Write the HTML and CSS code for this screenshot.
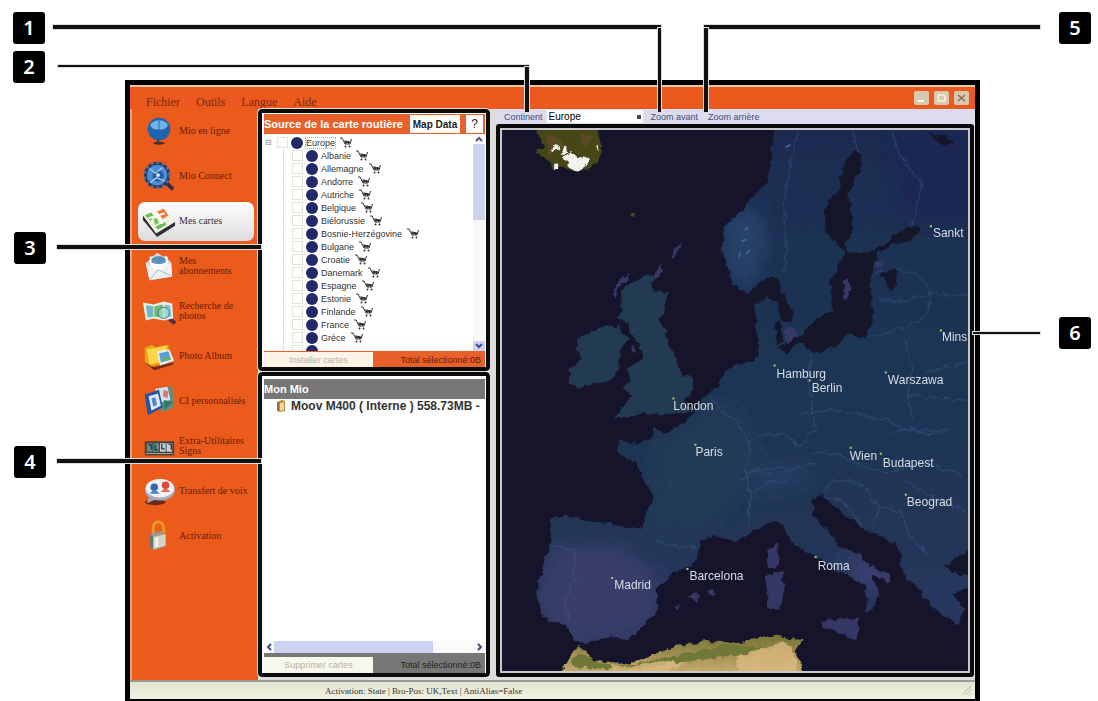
FILE: index.html
```html
<!DOCTYPE html>
<html lang="fr">
<head>
    <meta charset="UTF-8">
    <title>Mes cartes</title>
    <link rel="stylesheet" href="styles.css">
</head>
<body>
    <svg class="defs" aria-hidden="true">
        <symbol id="cart" viewBox="0 0 12 11">
            <path d="M0 1h2l3 6h5l1.500-5M4 4l6 1M4.500 5.500h6M6 3.500v3.500M8.500 4v3" fill="none" stroke="#333" stroke-width="1"/>
            <circle cx="5.500" cy="9.500" r="1" fill="#333"/><circle cx="9.500" cy="9.500" r="1" fill="#333"/>
        </symbol>
    </svg>
    <div class="figure">
        <div class="window">
            <div class="titlebar">
                <div class="menu">
                    <button>Fichier</button>
                    <button>Outils</button>
                    <button>Langue</button>
                    <button>Aide</button>
                </div>
                <div class="controls">
                    <button aria-label="Réduire"><svg viewBox="0 0 15 14"><path d="M4 10h6" stroke="#fff" stroke-width="2"/></svg></button>
                    <button aria-label="Agrandir"><svg viewBox="0 0 15 14"><path d="M4 4h7v6H4z" stroke="#f7f3e6" stroke-width="1.500" fill="none"/></svg></button>
                    <button aria-label="Fermer"><svg viewBox="0 0 15 14"><path d="M4 4l7 6M11 4l-7 6" stroke="#8a6a50" stroke-width="1.500"/></svg></button>
                </div>
            </div>
            <div class="content">
                <nav class="sidebar">
                    <a href="#">
                        <svg viewBox="0 0 36 36"><ellipse cx="18" cy="31" rx="6" ry="1.500" fill="#4a2a20"/><circle cx="18" cy="16" r="12" fill="#1f62ae"/><path d="M8 11q10-9 20 0-3 6-10 6T8 11z" fill="#6fb2e8"/><path d="M6 17h24M18 4v24M10 8q-5 8 0 17M26 8q5 8 0 17" fill="none" stroke="#2a66a8" stroke-width="1"/><path d="M17 27v4" stroke="#2b3c55" stroke-width="2"/></svg>
                        <span>Mio en ligne</span>
                    </a>
                    <a href="#">
                        <svg viewBox="0 0 36 36"><path d="M24 24l9 8" stroke="#3c2b40" stroke-width="4"/><circle cx="16" cy="17" r="14" fill="#26375f"/><circle cx="16" cy="17" r="11" fill="#4e8cd0"/><circle cx="16" cy="17" r="13" fill="none" stroke="#5f75a0" stroke-width="2" stroke-dasharray="3 3"/><circle cx="17" cy="18" r="6" fill="#255ba8"/><path d="M8 10l6 5 8-6M9 25l6-5 9 3" stroke="#9cc6ea" fill="none" stroke-width="1.500"/><circle cx="17" cy="17" r="2" fill="#d5eeff"/></svg>
                        <span>Mio Connect</span>
                    </a>
                    <a href="#" class="active">
                        <svg viewBox="0 0 36 36"><path d="M1 12l14 19 20-12v4L16 35 1 17z" fill="#302d33"/><path d="M1 12l14 19 19-12L23 4z" fill="#f2f1e3"/><path d="M3 12l7-3 2 4-3 5zM14 24l10-5 2 3-9 5z" fill="#69bb53"/><path d="M16 8l7-3 5 7-6 4z" fill="#ed7a35"/><path d="M7 15l17-5M13 8l9 13" stroke="#fff" stroke-width="2"/><path d="M12 16l4-1 2 5-4 2z" fill="#6dc466"/></svg>
                        <span>Mes cartes</span>
                    </a>
                    <a href="#">
                        <svg viewBox="0 0 36 36"><path d="M4 15l12-11 14 9 2 16-24 4z" fill="#d6dce4"/><path d="M8 8h19l1 12-10 5-9-6z" fill="#f8fbff"/><path d="M10 10q8-5 15 0v4q-7 4-15 0z" fill="#5c8dbb"/><path d="M4 15l14 9 13-10 1 15-24 4z" fill="#eef0f3"/><path d="M8 33l9-11 15 7" fill="none" stroke="#aab3bd"/></svg>
                        <span>Mes<br>abonnements</span>
                    </a>
                    <a href="#">
                        <svg viewBox="0 0 36 36"><path d="M26 24l9 7" stroke="#453045" stroke-width="4"/><path d="M1 9l11 2 11-3 9 2 1 16-10 2-11-2-8 2z" fill="#e8efe6"/><path d="M4 12l8 1v11l-6 1z" fill="#6fb5ca"/><path d="M13 13l9-2v14l-9-1z" fill="#70b96e"/><path d="M24 11l6 1 1 12-7 1z" fill="#80c5d5"/><circle cx="23" cy="20" r="6" fill="#a7dccb" fill-opacity=".7" stroke="#49777e"/></svg>
                        <span>Recherche de photos</span>
                    </a>
                    <a href="#">
                        <svg viewBox="0 0 36 36"><path d="M3 25l10 5 20-5v2l-20 6z" fill="#6c2c18"/><path d="M3 9l8-3 3 3 14-3 1 18-19 5-7-5z" fill="#e6a91c"/><path d="M5 11l21-4v16L8 27z" fill="#ffd44b"/><path d="M16 13l13-2 5 12-15 5z" fill="#e5f1f5"/><path d="M18 15l10-2 3 9-11 3z" fill="#5b9fcf"/><path d="M20 23l6-4 5 3z" fill="#75ae54"/></svg>
                        <span>Photo Album</span>
                    </a>
                    <a href="#">
                        <svg viewBox="0 0 36 36"><path d="M16 4l16-1 2 22-13 5z" fill="#5c8f80"/><path d="M14 5l13-2 3 14-14 4z" fill="#d5dfef"/><path d="M23 6l5 2-1 7-5-2z" fill="#da7770"/><path d="M3 11l15-5 4 19L6 33z" fill="#26549f"/><path d="M7 13l10-3 3 13-10 5z" fill="#dceaf9"/><path d="M10 15l4-1 2 8-4 2z" fill="#4f84ce"/><path d="M23 17l10 2-9 8z" fill="#307b5f"/></svg>
                        <span>CI personnalisés</span>
                    </a>
                    <a href="#">
                        <svg viewBox="0 0 36 36"><path d="M3 13h31v15H3z" fill="#42423e"/><path d="M5 15h6v9H5zM12 15h6v9h-6z" fill="#668b82"/><path d="M19 15h6v9h-6zM26 15h6v9h-6z" fill="#c9ccd0"/><path d="M21 16v5h3M28 16h3v6M7 17h3v5M14 17v5h3" fill="none" stroke="#28385b" stroke-width="1.500"/><path d="M4 26h29" stroke="#a7aba0"/></svg>
                        <span>Extra-Utilitaires Signs</span>
                    </a>
                    <a href="#">
                        <svg viewBox="0 0 36 36"><ellipse cx="14" cy="30" rx="11" ry="3" fill="#692b1a"/><path d="M8 23l-3 8 12-5z" fill="#a3a6ae"/><ellipse cx="19" cy="17" rx="16" ry="11" fill="#a5adb9"/><ellipse cx="19" cy="15" rx="15" ry="10" fill="#eef1f5"/><circle cx="13" cy="14" r="4" fill="#3767b0"/><path d="M8 21q5-7 11 0" fill="#5385c4"/><circle cx="25" cy="12" r="4" fill="#d84b38"/><path d="M20 19q5-7 10 0" fill="#e36c52"/></svg>
                        <span>Transfert de voix</span>
                    </a>
                    <a href="#">
                        <svg viewBox="0 0 36 36"><path d="M12 15q-1-12 5-12 7 0 6 12" fill="none" stroke="#e99a22" stroke-width="3"/><path d="M8 16l12-3 5 4v12l-13 4-4-4z" fill="#9b9b90"/><path d="M8 16l4 3v14l-4-4z" fill="#6e746c"/><path d="M12 19l13-3v12l-13 4z" fill="#d2d4c7"/><path d="M14 20l3-1v10l-3 1z" fill="#f7f6e8"/></svg>
                        <span>Activation</span>
                    </a>
                </nav>
                <div class="panels">
                    <section class="panel source">
                        <div class="panel-head">
                            <h2>Source de la carte routière</h2>
                            <button class="map-data">Map Data</button>
                            <button class="help">?</button>
                        </div>
                        <div class="tree-box">
                            <ul class="tree">
                                <li class="root"><label><i>⊟</i><input type="checkbox"><b></b><span>Europe</span></label><svg><use href="#cart"/></svg></li>
                                <li><label><input type="checkbox"><b></b><span>Albanie</span></label><svg><use href="#cart"/></svg></li>
                                <li><label><input type="checkbox"><b></b><span>Allemagne</span></label><svg><use href="#cart"/></svg></li>
                                <li><label><input type="checkbox"><b></b><span>Andorre</span></label><svg><use href="#cart"/></svg></li>
                                <li><label><input type="checkbox"><b></b><span>Autriche</span></label><svg><use href="#cart"/></svg></li>
                                <li><label><input type="checkbox"><b></b><span>Belgique</span></label><svg><use href="#cart"/></svg></li>
                                <li><label><input type="checkbox"><b></b><span>Biélorussie</span></label><svg><use href="#cart"/></svg></li>
                                <li><label><input type="checkbox"><b></b><span>Bosnie-Herzégovine</span></label><svg><use href="#cart"/></svg></li>
                                <li><label><input type="checkbox"><b></b><span>Bulgarie</span></label><svg><use href="#cart"/></svg></li>
                                <li><label><input type="checkbox"><b></b><span>Croatie</span></label><svg><use href="#cart"/></svg></li>
                                <li><label><input type="checkbox"><b></b><span>Danemark</span></label><svg><use href="#cart"/></svg></li>
                                <li><label><input type="checkbox"><b></b><span>Espagne</span></label><svg><use href="#cart"/></svg></li>
                                <li><label><input type="checkbox"><b></b><span>Estonie</span></label><svg><use href="#cart"/></svg></li>
                                <li><label><input type="checkbox"><b></b><span>Finlande</span></label><svg><use href="#cart"/></svg></li>
                                <li><label><input type="checkbox"><b></b><span>France</span></label><svg><use href="#cart"/></svg></li>
                                <li><label><input type="checkbox"><b></b><span>Grèce</span></label><svg><use href="#cart"/></svg></li>
                                <li><label><input type="checkbox"><b></b></label></li>
                            </ul>
                            <div class="vscroll">
                                <svg viewBox="0 0 12 10"><path d="M3 7l3-3 3 3" fill="none" stroke="#4a5a8c" stroke-width="2"/></svg>
                                <div class="thumb"></div>
                                <svg class="down" viewBox="0 0 12 10"><path d="M3 3l3 3 3-3" fill="none" stroke="#3a4a9c" stroke-width="2"/></svg>
                            </div>
                        </div>
                        <div class="panel-foot">
                            <button>Installer cartes</button>
                            <span>Total sélectionné:0B</span>
                        </div>
                    </section>
                    <section class="panel device">
                        <div class="panel-head">
                            <h2>Mon Mio</h2>
                        </div>
                        <div class="device-row">
                            <svg viewBox="0 0 10 14"><path d="M1 3l5-2 3 1v10l-5 1-3-1z" fill="#b98a3a"/><path d="M4 4l4-1v8l-4 1z" fill="#f0d9a0"/><path d="M2 3v9" stroke="#6e542a"/></svg>
                            <span>Moov M400 ( Interne ) 558.73MB -</span>
                        </div>
                        <div class="hscroll">
                            <svg viewBox="0 0 10 12"><path d="M7 3L4 6l3 3" fill="none" stroke="#3f4d7c" stroke-width="2"/></svg>
                            <div class="track"><div class="thumb"></div></div>
                            <svg viewBox="0 0 10 12"><path d="M3 3l3 3-3 3" fill="none" stroke="#3f4d7c" stroke-width="2"/></svg>
                        </div>
                        <div class="panel-foot">
                            <button>Supprimer cartes</button>
                            <span>Total sélectionné:0B</span>
                        </div>
                    </section>
                </div>
                <div class="main">
                    <div class="toolbar">
                        <label for="continent">Continent</label>
                        <select id="continent"><option>Europe</option></select>
                        <button>Zoom avant</button>
                        <button>Zoom arrière</button>
                    </div>
                    <div class="map">
                        <svg viewBox="502 130 465 540" preserveAspectRatio="xMidYMid slice">
                            <defs>
                                <filter id="coast" x="-5%" y="-5%" width="110%" height="110%">
                                    <feTurbulence type="fractalNoise" baseFrequency=".12" numOctaves="3" seed="4"/>
                                    <feDisplacementMap in="SourceGraphic" scale="8" xChannelSelector="R" yChannelSelector="G"/>
                                </filter>
                                <filter id="soft" x="-30%" y="-30%" width="160%" height="160%"><feGaussianBlur stdDeviation="9"/></filter>
                                <linearGradient id="land" x1="0" y1="0" x2="0" y2="1">
                                    <stop offset="0" stop-color="#1b2b50"/>
                                    <stop offset=".45" stop-color="#1e3554"/>
                                    <stop offset=".75" stop-color="#203654"/>
                                    <stop offset="1" stop-color="#2b3762"/>
                                </linearGradient>
                                <linearGradient id="desert" x1="0" y1="0" x2="0" y2="1">
                                    <stop offset="0" stop-color="#6f7335"/>
                                    <stop offset=".4" stop-color="#a18d50"/>
                                    <stop offset="1" stop-color="#dab87b"/>
                                </linearGradient>
                                <clipPath id="mainland">
                                    <path d="M775 125L767 183 745 203 742 210 723 227 723 253 732 283 745 292 755 302 758 353 755 362 735 365 725 368 717 387 708 393 692 413 685 422 665 432 652 427 650 440 638 442 617 440 618 452 635 462 643 477 652 493 648 507 643 528 618 525 588 520 568 514 552 518 550 543 537 590 542 617 565 623 575 640 583 642 602 637 628 638 642 627 658 608 655 590 672 573 695 563 700 540 712 535 735 540 745 535 768 522 782 523 790 540 815 557 842 573 863 583 867 597 863 613 872 608 878 593 870 573 892 582 888 573 860 560 858 552 838 545 828 530 812 515 812 498 822 493 832 505 865 530 882 535 898 547 902 570 922 593 935 610 958 623 962 607 952 592 975 583V125z"/>
                                </clipPath>
                            </defs>
                            <path class="sea" d="M400 0h700v800H400z"/>
                            <g filter="url(#coast)">
                                <path fill="url(#land)" d="M775 120L767 183 745 203 742 210 723 227 723 253 732 283 745 292 755 302 758 353 755 362 735 365 725 368 717 387 708 393 692 413 685 422 665 432 652 427 650 440 638 442 617 440 618 452 635 462 643 477 652 493 648 507 643 528 618 525 588 520 568 514 552 518 550 543 537 590 542 617 565 623 575 640 583 642 602 637 628 638 642 627 658 608 655 590 672 573 695 563 700 540 712 535 735 540 745 535 768 522 782 523 790 540 815 557 842 573 863 583 867 597 863 613 872 608 878 593 870 573 892 582 888 573 860 560 858 552 838 545 828 530 812 515 812 498 822 493 832 505 865 530 882 535 898 547 902 570 922 593 935 610 958 623 962 607 952 592 985 583V120z"/>
                                <g clip-path="url(#mainland)">
                                    <g filter="url(#soft)">
                                        <path d="M555 545l65 0 38 30-10 55-80 15-35-45z" fill="#383c69"/>
                                        <path d="M660 440l70-40 30 60-50 70-60 0z" fill="#233a57"/>
                                        <path d="M725 215l30-10 12 40-20 45-25-25z" fill="#26426a"/>
                                        <path d="M840 555l50 15-5 20-30-15z" fill="#45427a"/>
                                        <path d="M890 130h90v90h-70z" fill="#1b2753"/>
                                        <path d="M745 475l60-12 10 12-50 20z" fill="#223c62"/>
                                    </g>
                                </g>
                                <path class="isle" d="M638 277L652 275 652 290 668 293 660 317 668 340 675 353 681 375 694 377 690 395 683 404 693 409 678 414 645 413 630 416 612 419 628 400 633 394 620 388 632 380 628 367 642 358 640 343 632 337 628 323 618 317 623 303 620 290 628 285z"/>
                                <path class="isle" d="M608 325L620 327 628 340 620 350 618 370 608 380 578 387 568 382 570 368 582 360 577 350 578 338 595 330z"/>
                                <path class="south" d="M671 256l2-8 7-6-2 10-4 5zM652 278l3-8 8-5-2 8-8 9zM613 300l1-12 6-9 9-6-3 8-8 6zM631 350l3-6 2 5-4 5z"/>
                                <path class="south" d="M820 620L836 618 857 617 858 628 855 638 838 632 822 627zM765 575L782 570 784 590 780 606 768 610zM767 547L778 540 777 567 768 567zM689 595l7-5 5 5-5 5zM673 606l4-3 1 5zM707 590l5-1 2 4-5 1z"/>
                                <path class="sea" d="M852 152L861 154 860 170 850 188 847 195 852 215 852 232 843 245 848 252 866 252 880 246 893 235 915 225 920 229 912 240 890 245 878 253 872 267 868 287 873 313 865 338 848 333 832 347 815 352 798 343 785 353 778 348 790 338 802 335 812 322 832 310 830 280 842 260 843 250 825 233 824 210 838 188 843 167z"/>
                                <path class="sea" d="M880 272L893 268 895 282 892 291 882 278zM745 295L765 278 778 277 783 297 794 313 788 322 779 318 777 302 768 297 752 306zM928 132L952 140 954 146 940 144zM945 565L968 548 970 574 958 574zM774 320l5-2 4 24-6 2z"/>
                                <path class="south" d="M843 281l5-2 1 12-4 10-3-5zM873 261l8-3 1 8-7 2zM784 330l10-3 2 9-9 6z"/>
                                <path d="M536 132L544 146 536 153 547 158 553 169 562 166 572 171 587 170 598 161 602 147 597 125H542z" fill="#464619"/>
                                <path d="M547 134l14 4 4 8-16 8zM577 134l14 3-6 12z" fill="#5b4927"/>
                                <path d="M564 156L572 151 578 157 589 158 587 165 578 171 569 168zM551 149l6-4 2 4-6 3zM561 149l5-2 1 5-5 2zM554 165l4-1v5h-4zM594 147l4-2v5z" fill="#f2f3ec"/>
                                <path d="M557 680L577 643 584 650 592 658 628 663 655 653 675 645 705 640 740 642 778 634 790 637 803 638 795 650 806 680z" fill="url(#desert)"/>
                                <path d="M572 658l8-4 20 7 35 3 30-8 60-12 60 2-50 8-60 8-40 6-25 0-35-2z" fill="#6f7839"/>
                                <path d="M610 662l20 4 30-6 25 2-30 14h-40zM735 655l50-15 8 12 5 20h-60z" fill="#dcb980" opacity=".8"/>
                                <path d="M630 214l4-3 2 5-4 1z" fill="#49481c"/>
                            </g>
                            <g class="borders" filter="url(#coast)">
                                <path d="M850 130l4 14 4 9M892 133l5 18 12 18 12 14-4 18-5 23M798 130l-6 25-5 30-4 20 3 40-3 30"/>
                                <path d="M870 273l22-4 28 6 10 18-4 20-20 14-38 10M878 300l30 0 22-6h37M904 338l8 30-6 28 7 22M925 372l42-10M905 395l62 5"/>
                                <path d="M810 352l-3 25 4 30 4 20-16 18-18-12-22 2M799 415l30-6 25 4 28 6 34 12 34-3M811 452l24 0 22 12 26 8 38-10 40 12"/>
                                <path d="M708 393l16 20 18 14 8 18-6 28 6 20-2 34M652 538l20 8 24 2M746 471l22-4 22 2 24-8M822 492l12-14 28 6 16 22-6 20M878 506l22 4 8 24 20 20M905 480l30 20 30 10M551 545l24 4-2 30-8 20 3 22"/>
                                <path d="M818 495l24 4 20 28M740 480l14-10 18 4M752 492l18-12 16 2M890 433l20-6 18 8 20-4"/>
                            </g>
                            <g class="snow"><path d="M744 230l4-3M741 241l5-2M746 254l3-4M785 147l5-2M740 252l-2 5"/></g>
                            <g class="dots">
                                <path d="M929 226h2M939 330h2M773 365h2M808 380h2M884 372h2M672 398h2M694 444h2M849 447h2M879 453h2M904 494h2M611 577h2M686 568h2M814 556h2"/>
                            </g>
                            <g class="cities">
                                <text x="932" y="237">Sankt</text>
                                <text x="941" y="341">Mins</text>
                                <text x="776" y="377">Hamburg</text>
                                <text x="811" y="391">Berlin</text>
                                <text x="887" y="383">Warszawa</text>
                                <text x="673" y="409">London</text>
                                <text x="695" y="455">Paris</text>
                                <text x="849" y="459">Wien</text>
                                <text x="882" y="466">Budapest</text>
                                <text x="906" y="505">Beograd</text>
                                <text x="614" y="588">Madrid</text>
                                <text x="689" y="579">Barcelona</text>
                                <text x="817" y="569">Roma</text>
                            </g>
                        </svg>
                    </div>
                </div>
            </div>
            <div class="status">
                <span>Activation: State | Bro-Pos: UK,Text | AntiAlias=False</span>
                <svg viewBox="0 0 12 12"><path d="M11 1L1 11M11 5l-6 6M11 9l-2 2" stroke="#b5b5a5"/></svg>
            </div>
        </div>

        <i class="line thick h1"></i><i class="line v1"></i>
        <i class="line h2"></i><i class="line v2"></i>
        <i class="line thick h3"></i>
        <i class="line thick h4"></i>
        <i class="line thick h5"></i><i class="line v5"></i>
        <i class="line h6"></i>
        <b class="num n1">1</b>
        <b class="num n2">2</b>
        <b class="num n3">3</b>
        <b class="num n4">4</b>
        <b class="num n5">5</b>
        <b class="num n6">6</b>
    </div>
</body>
</html>
```
FILE: styles.css
```css
* {
    box-sizing: border-box;
}
body {
    margin: 0;
    background: #fff;
    font-family: "Liberation Sans", Arial, sans-serif;
    font-size: 9px;
    color: #333;
}
button {
    margin: 0;
    padding: 0;
    border: 0;
    background: none;
    font: inherit;
    color: inherit;
    white-space: nowrap;
}
.defs {
    display: none;
}
.figure {
    position: relative;
    display: flex;
    min-height: 100vh;
    padding: 80px 118px 0 125px;
}
.window {
    flex: 1;
    min-width: 0;
    display: flex;
    flex-direction: column;
    border: 5px solid #000;
    background: #ea5b1c;
}
.titlebar {
    height: 24px;
    display: flex;
    justify-content: space-between;
    border-top: 2px solid #f5c9a8;
    background: #ec591f;
}
.menu {
    display: flex;
    align-items: flex-end;
    gap: 16px;
    padding-left: 16px;
    font-family: "Liberation Serif", "Times New Roman", serif;
    font-size: 12px;
    line-height: 14px;
    color: #7a2a10;
}
.controls {
    display: flex;
    align-items: center;
    gap: 5px;
    padding-right: 6px;
}
.controls button {
    width: 15px;
    height: 14px;
    border-radius: 2px;
    background: #d9c9ac;
}
.controls svg {
    display: block;
}
.content {
    flex: 1;
    min-height: 0;
    display: grid;
    grid-template-columns: 128px 232px 1fr;
}

/* left navigation */
.sidebar {
    display: grid;
    grid-auto-rows: 1fr;
    padding: 0 4px 122px 6px;
    border-left: 2px solid #f0a070;
}
.sidebar a {
    display: flex;
    align-items: center;
    gap: 3px;
    padding-left: 4px;
    font-family: "Liberation Serif", "Times New Roman", serif;
    font-size: 10px;
    line-height: 10px;
    color: #6b2008;
    text-decoration: none;
}
.sidebar svg {
    flex: none;
    width: 34px;
    height: 34px;
}
.sidebar .active {
    margin: 3px 0;
    border-radius: 7px;
    background: linear-gradient(#fff, #dcdcdf);
    color: #333;
}

/* panels */
.panels {
    display: flex;
    flex-direction: column;
    padding-bottom: 3px;
    background: #ddd;
}
.panel {
    display: flex;
    flex-direction: column;
    padding: 1px 1px 0 2px;
    border: 4px solid #0b0b0b;
    border-radius: 4px;
    background: #fff;
    outline: 1px solid #ddd;
}
.source {
    height: 262px;
}
.device {
    flex: 1;
    padding-top: 3px;
    margin-top: 1px;
}
.panel-head {
    display: flex;
    align-items: center;
    height: 20px;
    background: #e8602a;
    color: #fff;
}
.panel-head h2 {
    flex: 1;
    min-width: 0;
    margin: 0;
    font-size: 11px;
    white-space: nowrap;
}
.panel-head button {
    height: 18px;
    background: #fff;
    color: #222;
}
.panel-head .map-data {
    width: 50px;
    font-size: 10px;
    font-weight: bold;
}
.panel-head .help {
    width: 17px;
    margin: 0 2px 0 6px;
    font-size: 12px;
}
.device .panel-head {
    background: #777;
}
.tree-box {
    flex: 1;
    min-height: 0;
    display: flex;
}
.tree {
    flex: 1;
    margin: 0;
    padding: 2px 0 0 1px;
    overflow: hidden;
    list-style: none;
}
.tree li {
    display: flex;
    align-items: center;
    gap: 5px;
    height: 13px;
    padding-left: 18px;
    white-space: nowrap;
}
.tree .root {
    padding-left: 0;
}
.tree label {
    display: flex;
    align-items: center;
    gap: 3px;
}
.tree li:not(.root) label {
    border-left: 1px solid #ddd;
    padding-left: 8px;
}
.tree i {
    width: 9px;
    font-size: 8px;
    font-style: normal;
    color: #888;
}
.tree input {
    appearance: none;
    width: 11px;
    height: 11px;
    margin: 0;
    border: 1px solid #e2e6d8;
}
.tree b {
    width: 12px;
    height: 12px;
    border-radius: 50%;
    background: #22286a;
}
.tree .root span {
    outline: 1px dotted #aaa;
}
.tree svg {
    width: 12px;
    height: 11px;
}
.vscroll {
    display: flex;
    flex-direction: column;
    width: 12px;
    background: #f8f8f6;
}
.vscroll .thumb {
    height: 76px;
    background: #cdd2ee;
}
.vscroll .down {
    margin-top: auto;
    background: #cdd2ee;
}
.panel-foot {
    display: flex;
    height: 16px;
    border-top: 1px solid #e8602a;
    background: #e8602a;
    color: #6b1c05;
}
.panel-foot button {
    width: 109px;
    background: #fbf3e6;
    color: #b9b2a6;
}
.panel-foot span {
    flex: 1;
    padding-right: 4px;
    text-align: right;
    line-height: 16px;
}
.device .panel-foot {
    height: 20px;
    border-top: 4px solid #777;
    background: #777;
    color: #222;
}
.device .panel-foot button {
    background: #f7f7ee;
}
.device-row {
    flex: 1;
    display: flex;
    gap: 5px;
    padding-left: 12px;
    font-size: 12px;
    font-weight: bold;
    line-height: 14px;
    white-space: nowrap;
}
.device-row svg {
    flex: none;
    width: 10px;
    height: 14px;
}
.hscroll {
    display: flex;
    height: 12px;
    background: #fafafa;
}
.hscroll svg {
    width: 10px;
}
.hscroll .track {
    flex: 1;
}
.hscroll .thumb {
    width: 79%;
    height: 12px;
    background: #cdd2f0;
}

/* toolbar and map */
.main {
    display: flex;
    flex-direction: column;
    min-width: 0;
    padding: 0 1px 3px 6px;
    background: #ddd;
}
.toolbar {
    display: flex;
    align-items: center;
    height: 15px;
    padding-left: 8px;
    background: #dcdcee;
    line-height: 12px;
    color: #454a78;
}
.toolbar select {
    appearance: none;
    width: 96px;
    height: 13px;
    margin: 0 8px 0 4px;
    padding: 0 2px;
    border: 0;
    background: #fff linear-gradient(#445, #445) no-repeat right 2px center / 4px 4px;
    font: 10px "Liberation Sans", Arial, sans-serif;
}
.toolbar button {
    margin-right: 10px;
}
.map {
    flex: 1;
    min-height: 0;
    border: 4px solid #0b0b0b;
    border-radius: 3px;
    padding: 2px;
    background: #c8c8cc;
}
.map svg {
    display: block;
    width: 100%;
    height: 100%;
}
.sea {
    fill: #15142b;
}
.isle {
    fill: #233b52;
}
.south {
    fill: #343965;
}
.borders path {
    fill: none;
    stroke: #466a9c;
    stroke-width: 1;
    opacity: .5;
}
.snow path {
    stroke: #3f6088;
    stroke-width: 2;
}
.dots path {
    stroke: #b3c46a;
    stroke-width: 2;
}
.cities {
    fill: #d5dce4;
    font-size: 12px;
}

.status {
    display: flex;
    justify-content: space-between;
    align-items: center;
    height: 19px;
    padding: 0 3px 0 195px;
    border-top: 2px solid #999;
    background: linear-gradient(#e4e5d0, #f1f1e0);
    font-family: "Liberation Serif", "Times New Roman", serif;
    font-size: 9px;
}
.status svg {
    width: 11px;
}

/* callouts laid over the window */
.num {
    position: absolute;
    width: 32px;
    height: 32px;
    border-radius: 3px;
    background: #000;
    color: #fff;
    font: 600 20px/32px "Noto Sans", sans-serif;
    text-align: center;
}
.n1 { left: 13px; top: 12px; }
.n2 { left: 13px; top: 51px; }
.n3 { left: 14px; top: 232px; }
.n4 { left: 14px; top: 446px; }
.n5 { right: 7px; top: 12px; }
.n6 { right: 7px; top: 317px; }
.line {
    position: absolute;
    height: 2px;
    background: #111;
    box-shadow: 0 0 0 1px #ddd;
}
.thick {
    height: 4px;
}
.h1 { left: 53px; top: 25px; width: 608px; }
.v1 { left: 658px; top: 28px; width: 3px; height: 84px; }
.h2 { left: 58px; top: 65px; width: 471px; }
.v2 { left: 525px; top: 67px; width: 4px; height: 45px; }
.h3 { left: 57px; top: 245px; width: 204px; }
.h4 { left: 57px; top: 459px; width: 204px; }
.h5 { left: 704px; top: 25px; right: 58px; }
.v5 { left: 704px; top: 28px; width: 4px; height: 84px; }
.h6 { right: 58px; top: 332px; width: 67px; }
```
